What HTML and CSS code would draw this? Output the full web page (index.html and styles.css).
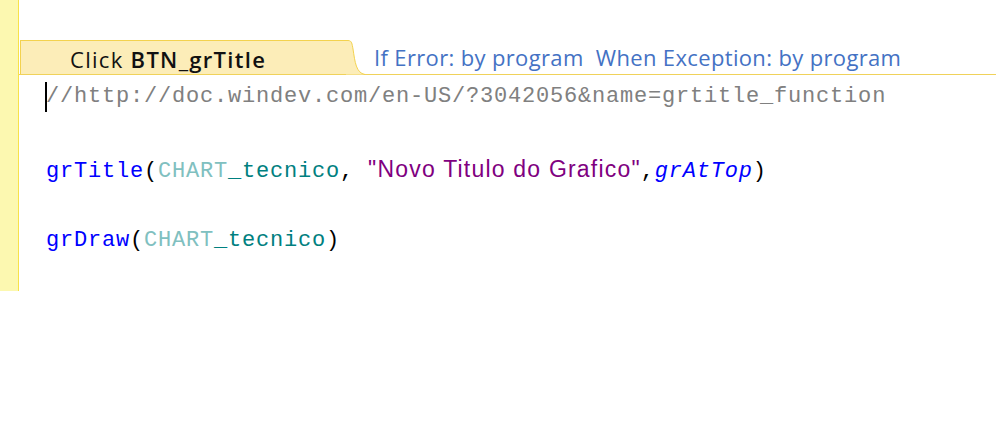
FILE: index.html
```html
<!DOCTYPE html>
<html>
<head>
<meta charset="utf-8">
<link rel="stylesheet" href="styles.css">
</head>
<body>
<div class="editor">
  <div class="gutter"></div>
  <div class="main">
    <div class="header">
      <div class="tab"><span class="evt">Click </span><span class="ctl">BTN_grTitle</span></div>
      <svg class="tab-curve" width="20" height="35" viewBox="0 0 20 35">
        <path d="M0 0.5 H2 C6 0.5 6 4 7 9 C9 22 10 33 19 34.5 H0 Z" fill="#fcedb8"/>
        <path d="M0 0.5 H2 C6 0.5 6 4 7 9 C9 22 10 33 19 34.5" fill="none" stroke="#f3d24e" stroke-width="1"/>
      </svg>
      <div class="opts">If Error: by program  When Exception: by program</div>
    </div>
    <div class="code">
      <div class="line"><span class="cursor"></span><span class="cmt">//http://doc.windev.com/en-US/?3042056&amp;name=grtitle_function</span></div>
      <div class="line"></div>
      <div class="line"><span class="fn">grTitle</span><span class="p">(</span><span class="ctl1">CHART</span><span class="ctl2">_tecnico</span><span class="p">, </span><span class="str">"Novo Titulo do Grafico"</span><span class="p">,</span><span class="cst">grAtTop</span><span class="p">)</span></div>
      <div class="line"></div>
      <div class="line"><span class="fn">grDraw</span><span class="p">(</span><span class="ctl1">CHART</span><span class="ctl2">_tecnico</span><span class="p">)</span></div>
    </div>
  </div>
</div>
</body>
</html>
```
FILE: styles.css
```css
html, body {
  margin: 0;
  padding: 0;
  background: #ffffff;
}

.editor {
  display: flex;
  align-items: flex-start;
  width: 997px;
}

.gutter {
  width: 18px;
  height: 291px;
  background: #fcf8b0;
  border-right: 1px solid #f7e24a;
  flex: none;
}

.main {
  flex: 1;
  padding-top: 40px;
  min-width: 0;
}

.header {
  display: flex;
  align-items: stretch;
  height: 34px;
  border-bottom: 1px solid #f0d25a;
  margin-right: 1px;
}

.tab {
  width: 326px;
  margin-left: 1px;
  background: #fcedb8;
  border-top: 1px solid #f3d24e;
  border-left: 1px solid #f3d24e;
  padding-left: 49px;
  box-sizing: border-box;
  font-family: "Open Sans", "Noto Sans", sans-serif;
  font-size: 22px;
  line-height: 36px;
  color: #111111;
  white-space: pre;
  letter-spacing: 1.3px;
}

.tab .ctl {
  font-weight: 600;
}

.tab-curve {
  flex: none;
  display: block;
  margin-bottom: -1px;
}

.opts {
  padding-left: 8px;
  font-family: "Open Sans", "Noto Sans", sans-serif;
  font-size: 22px;
  line-height: 34px;
  color: #4472c4;
  white-space: pre;
  letter-spacing: 0.35px;
}

.code {
  padding-top: 4px;
  padding-left: 27px;
  font-family: "Liberation Mono", monospace;
  font-size: 22px;
  letter-spacing: 0.8px;
}

.line {
  height: 36px;
  line-height: 36px;
  position: relative;
  white-space: pre;
}

.cursor {
  position: absolute;
  left: -1px;
  top: 3px;
  width: 2px;
  height: 30px;
  background: #000000;
}

.cmt { color: #808080; }
.fn { color: #0000ff; }
.p { color: #000000; }
.ctl1 { color: #80c0c0; }
.ctl2 { color: #008080; }
.str {
  color: #800080;
  font-family: "Liberation Sans", Arial, sans-serif;
  font-size: 23px;
  letter-spacing: 1.2px;
}
.cst {
  color: #0000ff;
  font-style: italic;
}
```
